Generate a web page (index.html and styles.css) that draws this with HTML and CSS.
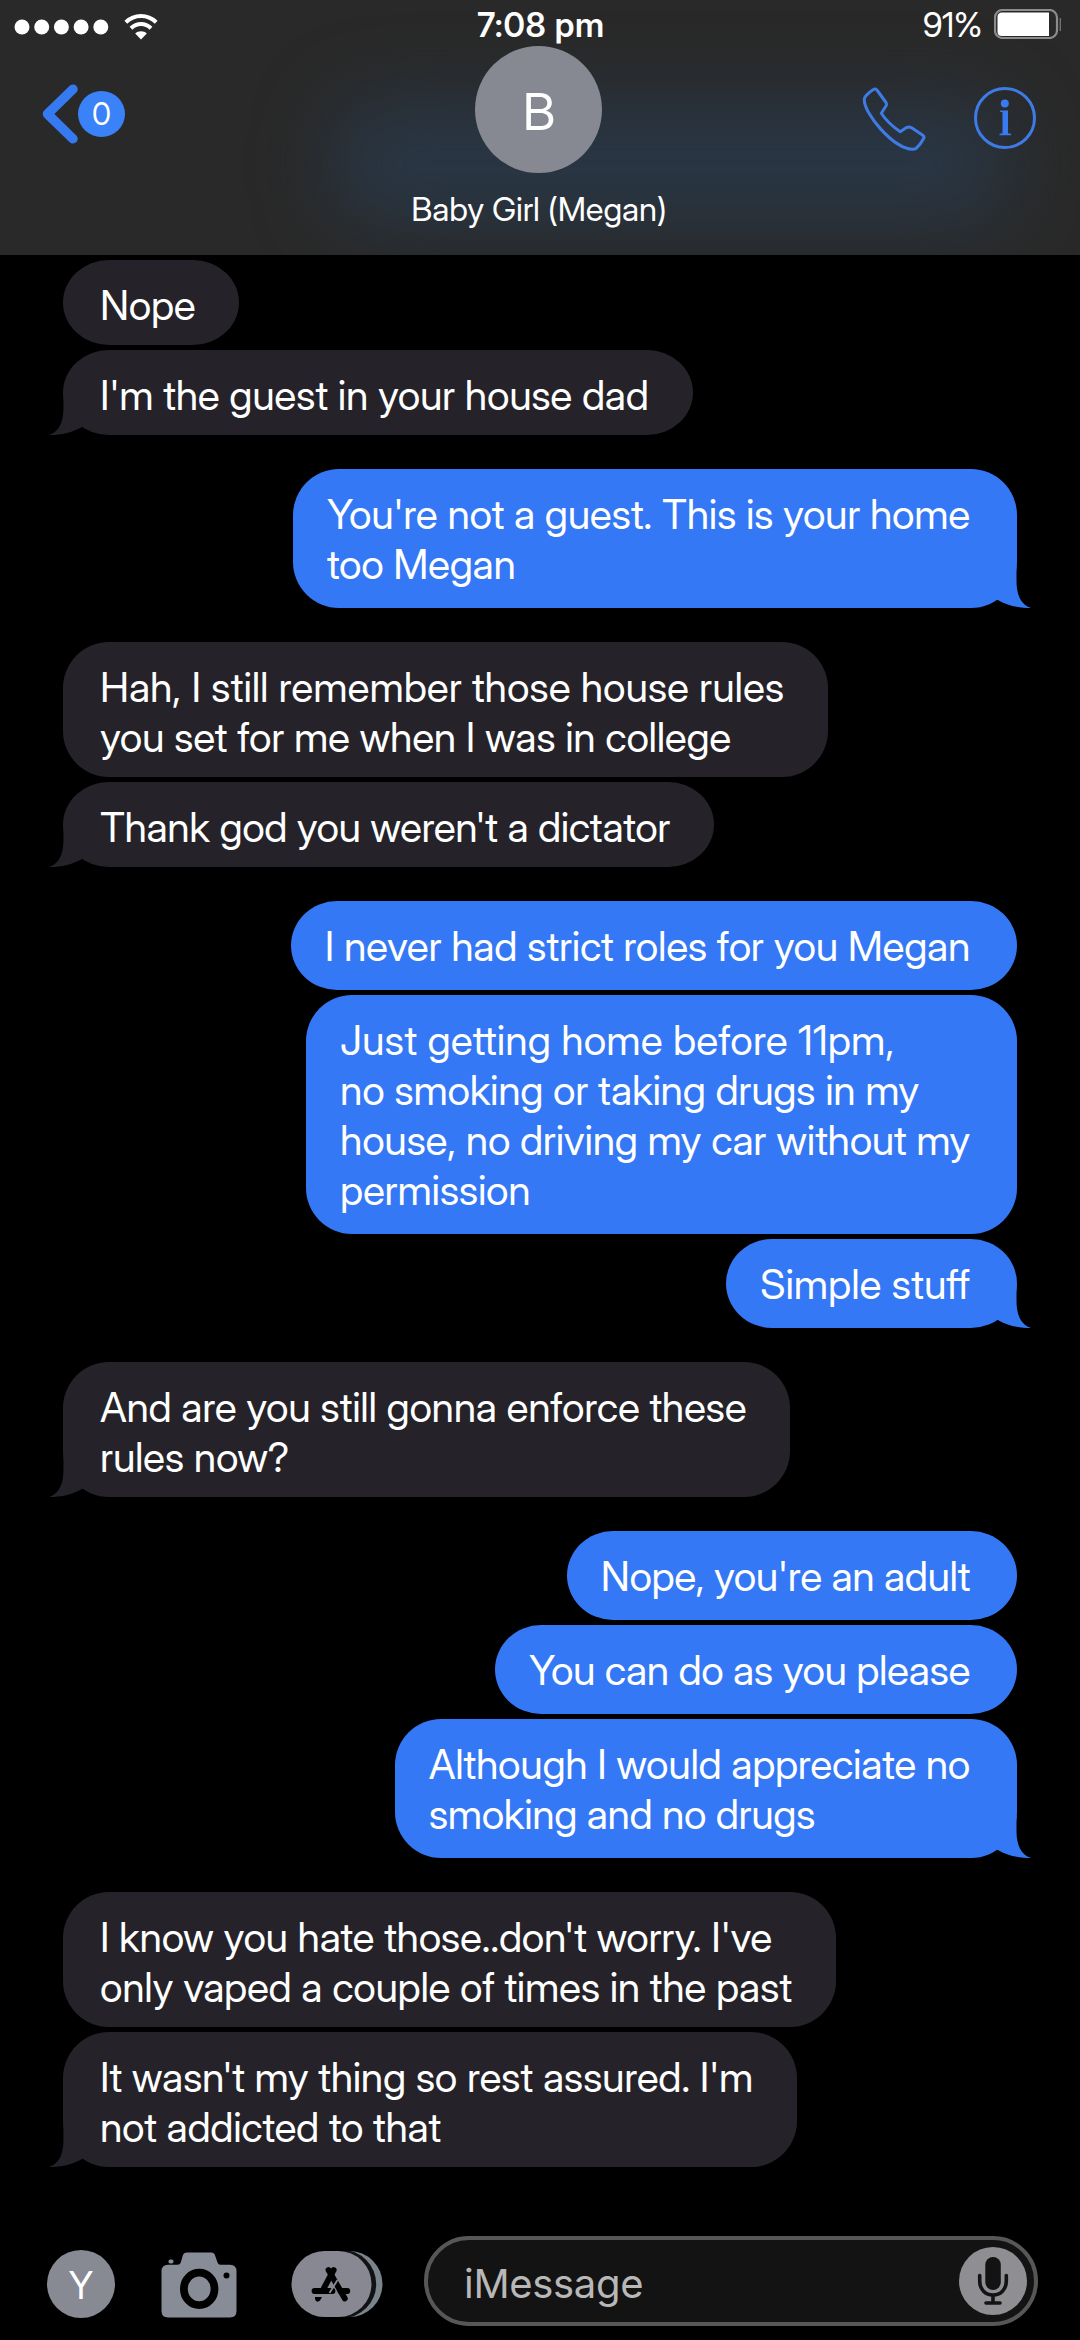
FILE: index.html
```html
<!DOCTYPE html>
<html lang="en">
<head>
<meta charset="utf-8">
<title>Messages</title>
<link rel="stylesheet" href="styles.css">
</head>
<body>
<div class="phone">
  <header class="header">
    <div class="glow"></div>
    <div class="status">
      <div class="signal">
        <svg class="dots" width="96" height="16" viewBox="0 0 96 16" fill="#fff"><circle cx="8" cy="8" r="7.5"/><circle cx="27.7" cy="8" r="7.5"/><circle cx="47.4" cy="8" r="7.5"/><circle cx="67.1" cy="8" r="7.5"/><circle cx="86.8" cy="8" r="7.5"/></svg>
        <svg class="wifi" width="34" height="26" viewBox="0 0 34 26" fill="none" stroke="#fff" stroke-width="4"><path d="M1.8 8.2C10.5 0 23.500 0 32.200 8.200"/><path d="M7 14.200C12.700 8.600 21.300 8.600 27 14.200"/><path d="M11.200 19.500C14 16.600 20 16.600 22.800 19.500L17 25.500Z" fill="#fff" stroke="none"/></svg>
      </div>
      <div class="time">7:08 pm</div>
      <div class="power">
        <span class="percent">91%</span>
        <svg width="68" height="30" viewBox="0 0 68 30"><rect x="1" y="1" width="62" height="28" rx="7.500" fill="none" stroke="#8c8c8c" stroke-width="2.200"/><path d="M8 3.500H55V27H8Q3.500 27 3.500 22.500V8Q3.500 3.500 8 3.500Z" fill="#fff"/><path d="M66.300 9V22" stroke="#777" stroke-width="1.300"/></svg>
      </div>
    </div>
    <div class="nav">
      <div class="back">
        <svg width="36" height="60" viewBox="0 0 36 60" fill="none" stroke="#357af0" stroke-width="9.500" stroke-linecap="round" stroke-linejoin="round"><path d="M31 5.200L5.500 30L31 54.800"/></svg>
        <span class="badge">0</span>
      </div>
      <div class="contact">
        <div class="avatar">B</div>
        <div class="name">Baby Girl (Megan)</div>
      </div>
      <div class="actions">
        <svg width="64" height="64" viewBox="861 86 64 64" fill="none" stroke="#3f7be4" stroke-width="3" stroke-linejoin="round"><path d="M872 88.800Q874.600 87 876.300 89.500L885 101.500Q886 103.200 885 105L880.300 112.300Q887 122.500 899.200 130.700L905.500 126.600Q908 125.400 910.300 126.600L921.800 134.200Q923.700 135.700 922.600 137.500Q919.500 143.500 915.300 147.200Q913.800 148.300 911.500 148.200C892 147.500 862.500 112 863.300 98.300Q863.500 96.500 865 94.800Q868.300 91 872 88.800Z"/></svg>
        <svg width="62" height="62" viewBox="0 0 62 62"><circle cx="31" cy="31" r="29.500" fill="none" stroke="#3f7be4" stroke-width="3"/><circle cx="30.800" cy="16.500" r="4" fill="#3a7af0"/><path d="M26 23.500H34V46.300L37 46.800V48.200H25.500V46.800L28.500 46.300V25.300L26 24.800Z" fill="#3a7af0"/></svg>
      </div>
    </div>
  </header>

  <main class="thread">
    <section class="group in">
      <p class="bubble one">Nope</p>
      <p class="bubble one">I'm the guest in your house dad<svg class="tip"><use href="#tip"/></svg></p>
    </section>
    <section class="group out">
      <p class="bubble">You're not a guest. This is your home<br>too Megan<svg class="tip"><use href="#tip"/></svg></p>
    </section>
    <section class="group in">
      <p class="bubble"><span class="loose">Hah, I still remember those house rules</span><br>you set for me when I was in college</p>
      <p class="bubble one snug">Thank god you weren't a dictator<svg class="tip"><use href="#tip"/></svg></p>
    </section>
    <section class="group out">
      <p class="bubble one">I never had strict roles for you Megan</p>
      <p class="bubble"><span class="wide">Just getting home before 11pm,</span><br>no smoking or taking drugs in my<br>house, no driving my car without my<br>permission</p>
      <p class="bubble one loose">Simple stuff<svg class="tip"><use href="#tip"/></svg></p>
    </section>
    <section class="group in">
      <p class="bubble">And are you still gonna enforce these<br>rules now?<svg class="tip"><use href="#tip"/></svg></p>
    </section>
    <section class="group out">
      <p class="bubble one snug">Nope, you're an adult</p>
      <p class="bubble one snug">You can do as you please</p>
      <p class="bubble">Although I would appreciate no<br><span class="snug">smoking and no drugs</span><svg class="tip"><use href="#tip"/></svg></p>
    </section>
    <section class="group in">
      <p class="bubble">I know you hate those..don't worry. I've<br>only vaped a couple of times in the past</p>
      <p class="bubble">It wasn't my thing so rest assured. I'm<br>not addicted to that<svg class="tip"><use href="#tip"/></svg></p>
    </section>
  </main>

  <footer class="composer">
    <div class="me">Y</div>
    <svg class="camera" width="76" height="66" viewBox="160.500 52.500 76 66"><path fill="#888c96" d="M186.500 53H210.500Q213.800 53 214.600 56L217 63Q217.800 65.300 220 65.300H229.500Q236 65.300 236 72V111.500Q236 118 229.500 118H167.500Q161 118 161 111.500V72Q161 65.300 167.500 65.300H177Q179.500 65.300 180.300 63L182.300 56Q183.200 53 186.500 53Z"/><rect x="168" y="60" width="5" height="4" rx="1.800" fill="#888c96"/><ellipse cx="198.700" cy="89.400" rx="15.300" ry="16.200" fill="none" stroke="#000" stroke-width="7.800"/><circle cx="226" cy="76" r="3" fill="#000"/></svg>
    <svg class="apps" width="92" height="66" viewBox="290.500 51 92 66"><rect x="300" y="51" width="82" height="66" rx="33" fill="#7b838b"/><rect x="293" y="50" width="82.700" height="68" rx="34" fill="#101214"/><rect x="291" y="51" width="80" height="66" rx="33" fill="#878891"/><g stroke="#000" stroke-width="5.800" stroke-linecap="round"><path d="M333.200 70L323.500 88"/><path d="M314 91H332"/><path d="M340 91H346.800"/><path d="M328 70L344.300 98.500"/></g><path d="M337 80L329 93" stroke="#878891" stroke-width="1.800"/><path d="M314.500 97H321.500L319.500 100.500Q317.500 102.500 315.500 101Q314 99.500 314.500 97Z"/></svg>
    <div class="field">
      <span class="placeholder">iMessage</span>
      <svg width="68" height="68" viewBox="959 47 68 68"><circle cx="993" cy="81" r="34" fill="#8e8e93"/><g stroke="#131313" fill="none" stroke-width="3.600" stroke-linecap="round"><path d="M979.700 75.500V81C979.700 89.500 985.500 95 993 95S1006.300 89.500 1006.300 81V75.500"/><path d="M993 96V102"/><path d="M986 103H1000"/></g><rect x="985.300" y="57" width="15.500" height="33" rx="7.750" fill="#131313"/></svg>
    </div>
  </footer>
</div>
<svg width="0" height="0" class="defs"><symbol id="tip" viewBox="0 0 50 50"><path d="M20 8H35.500V22C35.500 37 39.500 46.500 50 50C37 50 26 47.500 16 41.500L8 30Z"/></symbol></svg>
</body>
</html>
```
FILE: styles.css
```css
* { box-sizing: border-box; }
body { margin: 0; background: #000; color: #fff; font-family: "Inter Display", Inter, "Liberation Sans", sans-serif; }
.phone { width: 1080px; height: 2340px; display: flex; flex-direction: column; overflow: hidden; }
.defs { position: absolute; }

/* Header: status line, contact and call actions */
.header { position: relative; height: 255px; flex: none; background: #292929; overflow: hidden; }
.glow { position: absolute; left: 330px; top: 100px; width: 680px; height: 125px; border-radius: 50px; background: #293644; filter: blur(36px); }
.status { position: relative; height: 46px; display: grid; grid-template-columns: 1fr auto 1fr; align-items: center; padding: 0 18px 0 14px; }
.signal { display: flex; align-items: center; gap: 14px; padding-top: 6px; }
.time { font-size: 33.5px; font-weight: 600; line-height: 46px; padding-top: 2px; margin-left: 6px; letter-spacing: 0.7px; }
.power { display: flex; justify-content: flex-end; align-items: center; gap: 12px; }
.percent { font-size: 34px; line-height: 46px; padding-top: 2px; letter-spacing: -0.5px; }

.nav { position: relative; height: 209px; display: grid; grid-template-columns: 1fr auto 1fr; padding: 0 44px 0 42px; }
.back { display: flex; align-items: center; height: 60px; margin-top: 38px; }
.badge { width: 47px; height: 46px; border-radius: 50%; background: #3a82f7; font-size: 31px; line-height: 46px; text-align: center; }
.contact { display: flex; flex-direction: column; align-items: center; gap: 16px; }
.avatar { width: 127px; height: 127px; border-radius: 50%; background: #868992; font-size: 51px; line-height: 131px; text-align: center; }
.name { font-size: 33px; line-height: 40px; letter-spacing: -0.1px; white-space: nowrap; }
.actions { display: flex; justify-content: flex-end; gap: 48px; padding-top: 41px; }

/* Conversation */
.thread { flex: none; height: 1970px; padding: 5px 63px 0; display: flex; flex-direction: column; gap: 34px; }
.group { display: flex; flex-direction: column; gap: 5px; align-items: flex-start; }
.bubble { position: relative; margin: 0; font-size: 41px; line-height: 50px; letter-spacing: -0.33px; border-radius: 46px; white-space: nowrap; }
.snug { letter-spacing: -0.45px; }
.loose { letter-spacing: -0.1px; }
.wide { letter-spacing: 0.03px; }
.in .bubble { background: #252329; padding: 20px 44px 15px 37px; }
.out { align-items: flex-end; }
.out .bubble { background: #3478f6; padding: 20px 47px 19px 34px; }
.in .one { border-radius: 46px / 42.5px; }
.out .one { border-radius: 46px / 44.5px; }
.tip { position: absolute; bottom: 0; width: 50px; height: 50px; }
.in .tip { left: -14px; transform: scaleX(-1); fill: #252329; }
.out .tip { right: -14px; fill: #3478f6; }

/* Message composer */
.composer { flex: 1; display: flex; align-items: flex-start; padding: 11px 42px 0 47px; }
.me { width: 68px; height: 68px; margin-top: 14px; border-radius: 50%; background: #878a93; font-size: 38px; line-height: 70px; text-align: center; }
.camera { margin: 16px 0 0 46px; }
.apps { margin: 15px 0 0 54px; }
.field { margin-left: 41px; flex: 1; height: 90px; border: 4px solid #575757; border-radius: 45px; background: #131313; display: flex; align-items: center; justify-content: space-between; padding: 0 7px 0 36px; }
.placeholder { font-family: Inter, sans-serif; font-size: 40px; letter-spacing: -0.3px; color: #b8b8b8; padding-top: 5px; }
```
